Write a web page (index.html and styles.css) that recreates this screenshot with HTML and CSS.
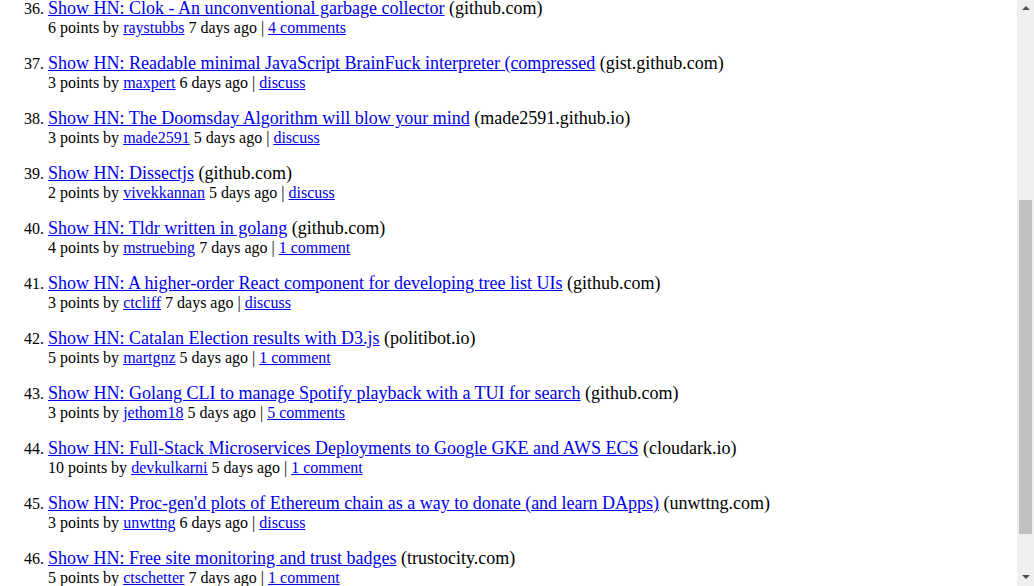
FILE: index.html
```html
<!DOCTYPE html>
<html>
<head>
<meta charset="utf-8">
<link rel="stylesheet" href="styles.css">
</head>
<body>
<div class="page">
<ol class="stories" start="36">
<li><div class="title"><a href="#">Show HN: Clok - An unconventional garbage collector</a> (github.com)</div><div class="sub">6 points by <a href="#">raystubbs</a> 7 days ago | <a href="#">4 comments</a></div></li>
<li><div class="title"><a href="#">Show HN: Readable minimal JavaScript BrainFuck interpreter (compressed</a> (gist.github.com)</div><div class="sub">3 points by <a href="#">maxpert</a> 6 days ago | <a href="#">discuss</a></div></li>
<li><div class="title"><a href="#">Show HN: The Doomsday Algorithm will blow your mind</a> (made2591.github.io)</div><div class="sub">3 points by <a href="#">made2591</a> 5 days ago | <a href="#">discuss</a></div></li>
<li><div class="title"><a href="#">Show HN: Dissectjs</a> (github.com)</div><div class="sub">2 points by <a href="#">vivekkannan</a> 5 days ago | <a href="#">discuss</a></div></li>
<li><div class="title"><a href="#">Show HN: Tldr written in golang</a> (github.com)</div><div class="sub">4 points by <a href="#">mstruebing</a> 7 days ago | <a href="#">1 comment</a></div></li>
<li><div class="title"><a href="#">Show HN: A higher-order React component for developing tree list UIs</a> (github.com)</div><div class="sub">3 points by <a href="#">ctcliff</a> 7 days ago | <a href="#">discuss</a></div></li>
<li><div class="title"><a href="#">Show HN: Catalan Election results with D3.js</a> (politibot.io)</div><div class="sub">5 points by <a href="#">martgnz</a> 5 days ago | <a href="#">1 comment</a></div></li>
<li><div class="title"><a href="#">Show HN: Golang CLI to manage Spotify playback with a TUI for search</a> (github.com)</div><div class="sub">3 points by <a href="#">jethom18</a> 5 days ago | <a href="#">5 comments</a></div></li>
<li><div class="title"><a href="#">Show HN: Full-Stack Microservices Deployments to Google GKE and AWS ECS</a> (cloudark.io)</div><div class="sub">10 points by <a href="#">devkulkarni</a> 5 days ago | <a href="#">1 comment</a></div></li>
<li><div class="title"><a href="#">Show HN: Proc-gen'd plots of Ethereum chain as a way to donate (and learn DApps)</a> (unwttng.com)</div><div class="sub">3 points by <a href="#">unwttng</a> 6 days ago | <a href="#">discuss</a></div></li>
<li><div class="title"><a href="#">Show HN: Free site monitoring and trust badges</a> (trustocity.com)</div><div class="sub">5 points by <a href="#">ctschetter</a> 7 days ago | <a href="#">1 comment</a></div></li>
</ol>
</div>
<div class="scrollbar">
<div class="arrow-up"></div>
<div class="thumb"></div>
<div class="arrow-down"></div>
</div>
</body>
</html>
```
FILE: styles.css
```css
html, body {
  margin: 0;
  padding: 0;
  height: 100%;
  overflow: hidden;
  background: #fff;
}
body {
  font-family: "Liberation Serif", "Times New Roman", serif;
  color: #000;
}
.page {
  margin-right: 17px;
}
.stories {
  margin: -3px 0 0 0;
  padding-left: 48px;
  font-size: 16px;
}
.stories li {
  margin-bottom: 15px;
}
.title {
  font-size: 18px;
  line-height: 20px;
  padding-top: 1px;
}
.sub {
  font-size: 16px;
  line-height: 19px;
}
a {
  color: #00e;
  text-decoration: underline;
}
.scrollbar {
  position: absolute;
  top: 0;
  right: 0;
  width: 17px;
  height: 586px;
  background: #f0f0f0;
}
.thumb {
  position: absolute;
  left: 2px;
  top: 200px;
  width: 13px;
  height: 334px;
  background: #c0c0c0;
}
.arrow-up, .arrow-down {
  position: absolute;
  left: 5px;
  width: 0;
  height: 0;
  border-left: 4px solid transparent;
  border-right: 4px solid transparent;
}
.arrow-up {
  top: 6px;
  border-bottom: 4px solid #505050;
}
.arrow-down {
  bottom: 7px;
  border-top: 4px solid #505050;
}
```
